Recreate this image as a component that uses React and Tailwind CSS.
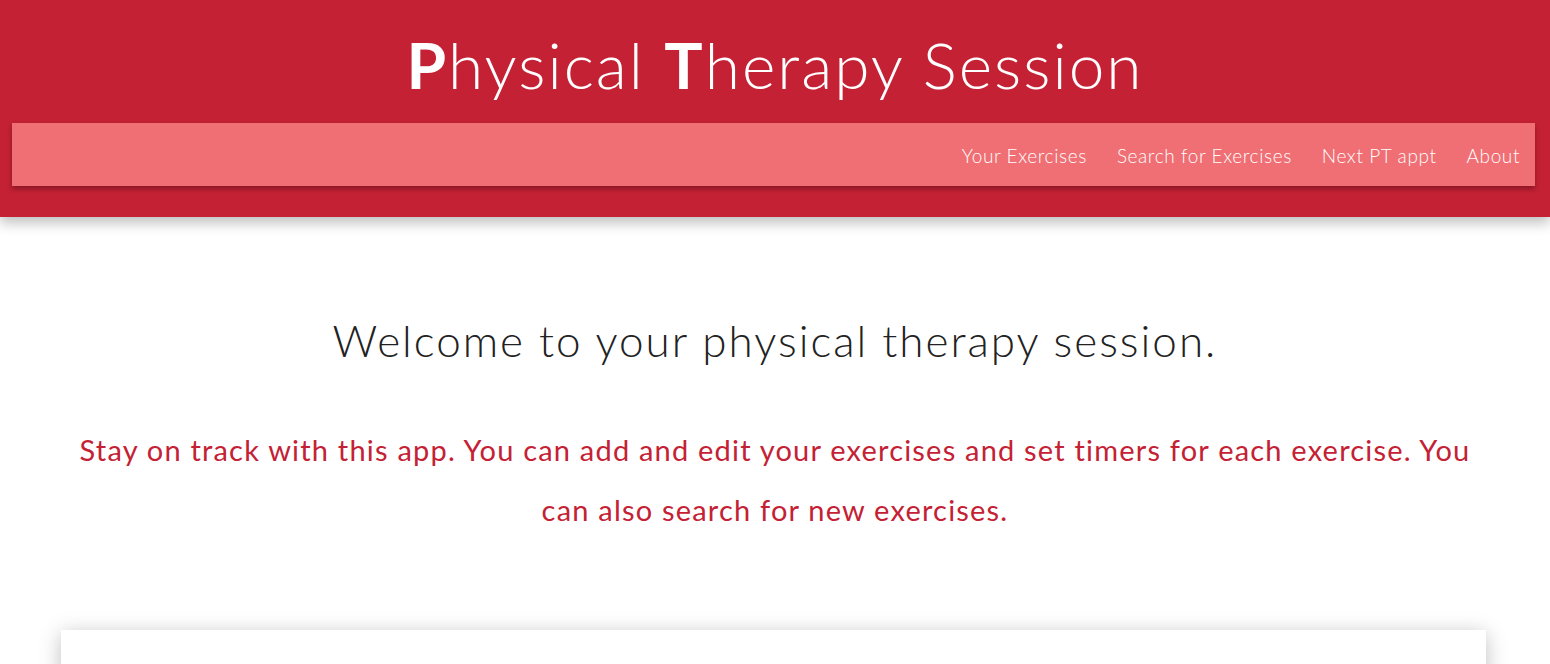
export default function App() {
  const links = ["Your Exercises", "Search for Exercises", "Next PT appt", "About"];
  return (
    <div className="min-h-screen bg-white font-['Lato','Open_Sans',sans-serif] overflow-hidden">
      <header className="bg-[#c42134] h-[217px] pt-[25px] shadow-[0_6px_12px_rgba(0,0,0,0.25)] relative z-10">
        <h1 className="text-center text-white text-[64px] leading-[80px] font-light tracking-[2px]">
          <span className="font-bold">P</span>hysical <span className="font-bold">T</span>herapy Session
        </h1>
        <nav className="ml-3 mr-[15px] mt-[18px] h-[63px] bg-[#ef6f74] shadow-[0_3px_5px_rgba(0,0,0,0.3)] flex items-center justify-end pr-[15px] gap-[30px]">
          {links.map(l => (
            <a key={l} className="text-white text-[19px] leading-[28px] pt-[2px] tracking-[0.6px] font-light">{l}</a>
          ))}
        </nav>
      </header>
      <main className="pt-[96px]">
        <h2 className="text-center text-[#222] text-[44px] leading-[54px] tracking-[2px] font-light">
          Welcome to your physical therapy session.
        </h2>
        <p className="mt-[53px] mx-auto max-w-[1440px] px-4 text-center text-[#c42134] text-[29px] leading-[60px] tracking-[1.2px]">
          Stay on track with this app. You can add and edit your exercises and set timers for each exercise. You can also search for new exercises.
        </p>
        <section className="mt-[90px] ml-[61px] w-[1425px] h-[200px] bg-white shadow-[0_4px_20px_rgba(0,0,0,0.25)]" />
      </main>
    </div>
  );
}
